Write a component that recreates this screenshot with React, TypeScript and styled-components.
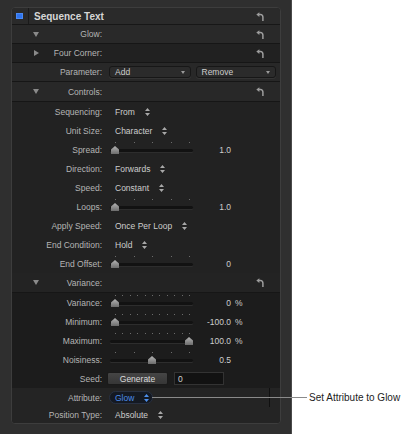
import React from "react";
import styled, { createGlobalStyle } from "styled-components";

const GlobalStyle = createGlobalStyle`
  html, body {
    margin: 0;
    padding: 0;
    background: #fff;
  }
  body {
    font-family: "Liberation Sans", Arial, sans-serif;
  }
`;

const Page = styled.div`
  position: relative;
  width: 408px;
  height: 434px;
  overflow: hidden;
  display: flex;
`;

const Frame = styled.div`
  width: 292px;
  height: 434px;
  flex: none;
  box-sizing: border-box;
  background: #2f2f2f;
  border-right: 1px solid #4a4a4a;
  padding: 7px 10px 0 11px;
`;

const Panel = styled.div`
  width: 270px;
  box-sizing: border-box;
  border: 1px solid #3d3d3d;
  border-radius: 4px;
  overflow: hidden;
  background: #232323;
`;

const HeaderRow = styled.div`
  display: flex;
  align-items: center;
  height: 17px;
  box-sizing: border-box;
  border-bottom: 1px solid #171717;
  background: #2a2a2a;
`;

const ColorCell = styled.div`
  width: 17px;
  height: 100%;
  flex: none;
  box-sizing: border-box;
  border-right: 1px solid #1a1a1a;
  display: flex;
  align-items: center;
  padding-left: 4px;
`;

const Swatch = styled.div`
  width: 7px;
  height: 6px;
  background: #2f74ee;
  box-shadow: inset 0 0 0 1px #4a8af5;
`;

const Title = styled.div`
  flex: 1;
  padding-left: 5px;
  font-size: 10px;
  font-weight: bold;
  color: #d6d6d6;
`;

const Section = styled.div<{ $bg: string }>`
  background: ${(p) => p.$bg};
`;

const Row = styled.div<{ $h?: number; $bg?: string; $line?: boolean }>`
  display: flex;
  align-items: center;
  box-sizing: border-box;
  height: ${(p) => p.$h ?? 19}px;
  background: ${(p) => p.$bg ?? "transparent"};
  border-bottom: ${(p) => (p.$line ? "1px solid #161616" : "none")};
  font-size: 8.5px;
`;

const Label = styled.div`
  width: 90px;
  flex: none;
  display: flex;
  align-items: center;
  box-sizing: border-box;
  padding-left: 21px;
  color: #b5b5b5;
  white-space: nowrap;
`;

const LabelText = styled.span`
  margin-left: auto;
`;

const Disclosure = styled.span<{ $open: boolean }>`
  width: 0;
  height: 0;
  ${(p) =>
    p.$open
      ? `border-left: 3px solid transparent;
         border-right: 3px solid transparent;
         border-top: 5px solid #8a8a8a;`
      : `border-top: 3px solid transparent;
         border-bottom: 3px solid transparent;
         border-left: 5px solid #8a8a8a;
         margin-left: 1px;`}
`;

const Value = styled.div`
  flex: 1;
  min-width: 0;
  height: 100%;
  display: flex;
  align-items: center;
  padding-left: 6px;
  color: #cdcdcd;
  white-space: nowrap;
`;

const UndoCell = styled.div`
  width: 30px;
  flex: none;
  display: flex;
  justify-content: flex-end;
  padding-right: 16px;
`;

const RowEdge = styled.div`
  width: 10px;
  height: 100%;
  flex: none;
  border-left: 1px solid #101010;
`;

const Popup = styled.div<{ $active?: boolean }>`
  display: inline-flex;
  align-items: center;
  gap: 10px;
  height: 13px;
  box-sizing: border-box;
  margin-left: 1px;
  padding: 0 3px 0 5px;
  border-radius: 7px;
  border: 1px solid ${(p) => (p.$active ? "#283041" : "transparent")};
  background: ${(p) => (p.$active ? "#141922" : "transparent")};
  color: ${(p) => (p.$active ? "#4c8ee9" : "#cdcdcd")};
`;

const Dropdown = styled.div<{ $w: number }>`
  display: flex;
  align-items: center;
  justify-content: space-between;
  width: ${(p) => p.$w}px;
  height: 12px;
  box-sizing: border-box;
  margin-left: 1px;
  margin-right: 4px;
  padding: 0 5px;
  border-radius: 3px;
  border: 1px solid #171717;
  background: #2b2b2b;
  box-shadow: 0 1px 0 #343434;
  color: #cdcdcd;
`;

const DropArrow = styled.span`
  width: 0;
  height: 0;
  border-left: 2.5px solid transparent;
  border-right: 2.5px solid transparent;
  border-top: 3px solid #9a9a9a;
`;

const SliderWrap = styled.div`
  position: relative;
  width: 86px;
  height: 100%;
  flex: none;
`;

const Ticks = styled.div`
  position: absolute;
  left: 7px;
  width: 75px;
  top: 2px;
  display: flex;
  justify-content: space-between;
`;

const Tick = styled.i`
  width: 1px;
  height: 1px;
  background: #6c6c6c;
`;

const Track = styled.div`
  position: absolute;
  left: 2px;
  right: 1px;
  top: 9px;
  height: 3px;
  border-radius: 2px;
  background: #121212;
  box-shadow: 0 1px 0 #2d2d2d;
`;

const Thumb = styled.div`
  position: absolute;
  top: 6px;
  width: 8px;
  height: 8px;
  margin-left: -4px;
  background: linear-gradient(#b4b4b4, #6c6c6c);
  clip-path: polygon(50% 0, 100% 45%, 100% 100%, 0 100%, 0 45%);
`;

const Num = styled.span`
  width: 37px;
  text-align: right;
  flex: none;
`;

const Unit = styled.span`
  margin-left: 4px;
`;

const Button = styled.div`
  width: 61px;
  height: 13px;
  box-sizing: border-box;
  margin-left: -1px;
  display: flex;
  align-items: center;
  justify-content: center;
  border: 1px solid #1a1a1a;
  border-radius: 2px;
  background: linear-gradient(#454545, #363636);
  color: #dcdcdc;
`;

const Field = styled.div`
  width: 50px;
  height: 13px;
  box-sizing: border-box;
  margin-left: 6px;
  padding-left: 3px;
  display: flex;
  align-items: center;
  background: #121212;
  border: 1px solid #333;
  color: #d0d0d0;
`;

const Callout = styled.div`
  position: absolute;
  left: 152px;
  top: 391px;
  display: flex;
  align-items: center;
  height: 12px;
`;

const CalloutLine = styled.div`
  width: 155px;
  height: 1px;
  background: #8a8a8a;
`;

const CalloutText = styled.span`
  margin-left: 2px;
  font-size: 10px;
  color: #1c1c1c;
  white-space: nowrap;
`;

function Arrows({ color = "#a8a8a8" }: { color?: string }) {
  return (
    <svg width="5" height="8" viewBox="0 0 5 8">
      <path d="M2.5 0 L5 3 H0 Z M0 5 H5 L2.5 8 Z" fill={color} />
    </svg>
  );
}

function UndoIcon() {
  return (
    <svg width="8" height="9" viewBox="0 0 8 9">
      <path d="M0.3 2.6 L3.4 0.2 V5 Z" fill="#9d9d9d" />
      <path
        d="M3 2.6 H4.6 A2.3 2.3 0 0 1 6.9 4.9 V9"
        fill="none"
        stroke="#9d9d9d"
        strokeWidth="1.5"
      />
    </svg>
  );
}

function Slider({ value, ticks }: { value: number; ticks: number }) {
  return (
    <SliderWrap>
      <Ticks>
        {Array.from({ length: ticks }, (_, i) => (
          <Tick key={i} />
        ))}
      </Ticks>
      <Track />
      <Thumb style={{ left: 7 + value * 74 }} />
    </SliderWrap>
  );
}

function Group({
  label,
  open = true,
  h,
  bg = "#292929",
}: {
  label: string;
  open?: boolean;
  h?: number;
  bg?: string;
}) {
  return (
    <Row $h={h} $bg={bg} $line>
      <Label>
        <Disclosure $open={open} />
        <LabelText>{label}</LabelText>
      </Label>
      <Value />
      <UndoCell>
        <UndoIcon />
      </UndoCell>
    </Row>
  );
}

function PopupRow({ label, value }: { label: string; value: string }) {
  return (
    <Row>
      <Label>
        <LabelText>{label}</LabelText>
      </Label>
      <Value>
        <Popup>
          {value}
          <Arrows />
        </Popup>
      </Value>
    </Row>
  );
}

function SliderRow({
  label,
  pos,
  ticks = 5,
  num,
  unit,
}: {
  label: string;
  pos: number;
  ticks?: number;
  num: string;
  unit?: string;
}) {
  return (
    <Row>
      <Label>
        <LabelText>{label}</LabelText>
      </Label>
      <Value>
        <Slider value={pos} ticks={ticks} />
        <Num>{num}</Num>
        {unit && <Unit>{unit}</Unit>}
      </Value>
    </Row>
  );
}

export default function App() {
  return (
    <Page>
      <GlobalStyle />
      <Frame>
        <Panel>
          <HeaderRow>
            <ColorCell>
              <Swatch />
            </ColorCell>
            <Title>Sequence Text</Title>
            <UndoCell>
              <UndoIcon />
            </UndoCell>
          </HeaderRow>
          <Group label="Glow:" />
          <Group label="Four Corner:" open={false} bg="#212121" />
          <Row $bg="#282828" $line>
            <Label>
              <LabelText>Parameter:</LabelText>
            </Label>
            <Value>
              <Dropdown $w={82}>
                Add
                <DropArrow />
              </Dropdown>
              <Dropdown $w={81}>
                Remove
                <DropArrow />
              </Dropdown>
            </Value>
          </Row>
          <Group label="Controls:" h={20} bg="#282828" />
          <Section $bg="#222222">
            <PopupRow label="Sequencing:" value="From" />
            <PopupRow label="Unit Size:" value="Character" />
            <SliderRow label="Spread:" pos={0} num="1.0" />
            <PopupRow label="Direction:" value="Forwards" />
            <PopupRow label="Speed:" value="Constant" />
            <SliderRow label="Loops:" pos={0} num="1.0" />
            <PopupRow label="Apply Speed:" value="Once Per Loop" />
            <PopupRow label="End Condition:" value="Hold" />
            <SliderRow label="End Offset:" pos={0} num="0" />
          </Section>
          <Group label="Variance:" h={20} bg="#232323" />
          <Section $bg="#1c1c1c">
            <SliderRow label="Variance:" pos={0} ticks={11} num="0" unit="%" />
            <SliderRow label="Minimum:" pos={0} ticks={11} num="-100.0" unit="%" />
            <SliderRow label="Maximum:" pos={1} ticks={11} num="100.0" unit="%" />
            <SliderRow label="Noisiness:" pos={0.5} num="0.5" />
            <Row>
              <Label>
                <LabelText>Seed:</LabelText>
              </Label>
              <Value>
                <Button>Generate</Button>
                <Field>0</Field>
              </Value>
            </Row>
          </Section>
          <Section $bg="#242424">
            <Row>
              <Label>
                <LabelText>Attribute:</LabelText>
              </Label>
              <Value>
                <Popup $active>
                  Glow
                  <Arrows color="#4c8ee9" />
                </Popup>
              </Value>
              <RowEdge />
            </Row>
            <Row $h={16}>
              <Label>
                <LabelText>Position Type:</LabelText>
              </Label>
              <Value>
                <Popup>
                  Absolute
                  <Arrows />
                </Popup>
              </Value>
            </Row>
          </Section>
        </Panel>
      </Frame>
      <Callout>
        <CalloutLine />
        <CalloutText>Set Attribute to Glow</CalloutText>
      </Callout>
    </Page>
  );
}
